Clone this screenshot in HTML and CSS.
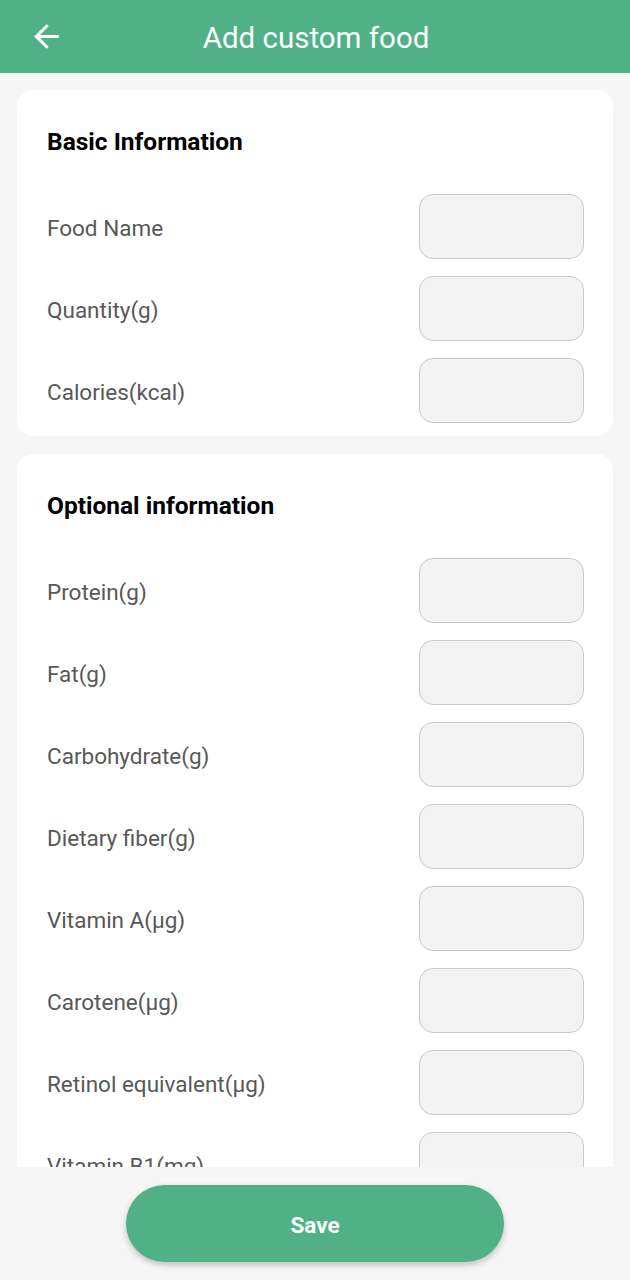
FILE: index.html
```html
<!DOCTYPE html>
<html lang="en">

<head>
  <meta charset="UTF-8">
  <meta name="viewport" content="width=device-width, initial-scale=1.0">
  <title>Add custom food</title>
  <link rel="stylesheet" href="styles.css">
</head>

<body>
  <div class="Page">
    <header class="TopBar">
      <button class="TopBar-back" aria-label="Back">
        <svg viewBox="0 0 24 24">
          <path d="M20 11H7.83l5.59-5.59L12 4l-8 8 8 8 1.41-1.41L7.83 13H20v-2z" />
        </svg>
      </button>
      <h1 class="TopBar-title">Add custom food</h1>
    </header>

    <main class="Scroll">
      <section class="Card">
        <h2>Basic Information</h2>
        <div class="Row"><label for="foodName">Food Name</label><input type="text" id="foodName"></div>
        <div class="Row"><label for="quantity">Quantity(g)</label><input type="text" id="quantity"></div>
        <div class="Row"><label for="calories">Calories(kcal)</label><input type="text" id="calories"></div>
      </section>

      <section class="Card">
        <h2>Optional information</h2>
        <div class="Row"><label for="protein">Protein(g)</label><input type="text" id="protein"></div>
        <div class="Row"><label for="fat">Fat(g)</label><input type="text" id="fat"></div>
        <div class="Row"><label for="carb">Carbohydrate(g)</label><input type="text" id="carb"></div>
        <div class="Row"><label for="fiber">Dietary fiber(g)</label><input type="text" id="fiber"></div>
        <div class="Row"><label for="vitA">Vitamin A(μg)</label><input type="text" id="vitA"></div>
        <div class="Row"><label for="carotene">Carotene(μg)</label><input type="text" id="carotene"></div>
        <div class="Row"><label for="retinol">Retinol equivalent(μg)</label><input type="text" id="retinol"></div>
        <div class="Row"><label for="vitB1">Vitamin B1(mg)</label><input type="text" id="vitB1"></div>
      </section>
    </main>

    <footer class="BottomBar">
      <button class="SaveBtn">Save</button>
    </footer>
  </div>
</body>

</html>
```

FILE: styles.css
```css
body {
  background: #f6f6f6;
  color: #555;
  font-family: Roboto, "Liberation Sans", Arial, sans-serif;
  margin: 0;
}

* {
  box-sizing: border-box;
}

button {
  -webkit-appearance: none;
  appearance: none;
  border: 0;
  padding: 0;
  cursor: pointer;
  font-family: inherit;
}

.Page {
  display: flex;
  flex-direction: column;
  height: 1280px;
}

.TopBar {
  display: flex;
  align-items: center;
  justify-content: center;
  position: relative;
  height: 73px;
  flex-shrink: 0;
  background: #51b186;
  color: #fff;
}

.TopBar-back {
  position: absolute;
  left: 27px;
  top: 50%;
  transform: translateY(-50%);
  background: transparent;
  color: #fff;
  width: 38px;
  height: 38px;
  display: flex;
  align-items: center;
  justify-content: center;
}

.TopBar-back svg {
  display: block;
  width: 37px;
  height: 37px;
  fill: currentColor;
}

.TopBar-title {
  margin: 0 0 0 2px;
  font-size: 29.5px;
  line-height: 36px;
  font-weight: 400;
  padding-top: 2px;
}

.Scroll {
  flex: 1;
  overflow: hidden;
  padding: 17px 17px 0;
}

.Card {
  background: #fff;
  border-radius: 16px;
  padding: 0 30px 13px;
  margin-bottom: 18px;
}

h2 {
  margin: 0 0 37px;
  padding-top: 37px;
  font-size: 24.5px;
  line-height: 30px;
  font-weight: 700;
  color: #000;
}

.Row {
  display: flex;
  justify-content: space-between;
  align-items: center;
  height: 65px;
  margin-bottom: 17px;
}

.Row:last-child {
  margin-bottom: 0;
}

label {
  font-size: 22.5px;
  line-height: 30px;
  padding-top: 2px;
  color: #585858;
}

input {
  -webkit-appearance: none;
  appearance: none;
  width: 165px;
  height: 65px;
  margin-right: -1px;
  background: #f3f3f3;
  border: 1px solid #c9c9c9;
  border-radius: 14px;
  font-size: 18px;
  padding: 0 12px;
}

input:focus {
  outline: 0;
}

.BottomBar {
  height: 113px;
  flex-shrink: 0;
  display: flex;
  justify-content: center;
  padding-top: 18px;
}

.SaveBtn {
  width: 378px;
  height: 77px;
  border-radius: 39px;
  background: #51b186;
  color: #fff;
  font-size: 22.5px;
  font-weight: 700;
  padding-top: 2px;
  box-shadow: 0 3px 6px rgba(0, 0, 0, .22);
}
```
